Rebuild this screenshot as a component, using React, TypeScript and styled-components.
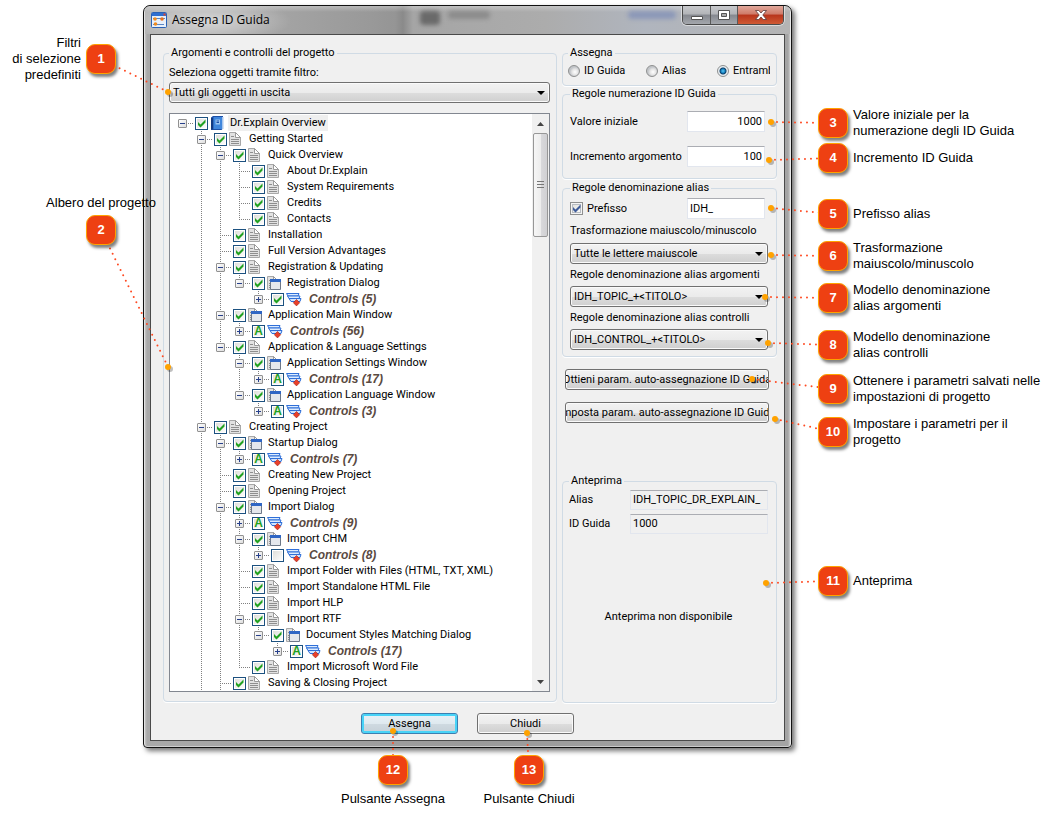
import React from "react";
import styled, { createGlobalStyle, css } from "styled-components";

const uiFont = 'Roboto, "Liberation Sans", sans-serif';
const noteFont = '"Liberation Sans", Arial, sans-serif';

const GlobalStyle = createGlobalStyle`
  * { box-sizing: border-box; }
  body { margin: 0; background: #fff; color: #000; font-family: ${noteFont}; font-size: 13px; }
  button, input, select { font: inherit; color: inherit; margin: 0; }
`;

/* ---------- page ---------- */

const Page = styled.main`
  display: grid;
  grid-template-columns: 143px minmax(0, 1fr) 263px;
  align-items: start;
  padding-top: 5px;
  min-height: 100vh;
`;

const Margin = styled.aside`
  position: relative;
  z-index: 2;
`;

/* ---------- window ---------- */

const Window = styled.section`
  display: flex;
  flex-direction: column;
  padding: 0 6px 6px;
  border: 1px solid #111;
  border-radius: 7px 7px 4px 4px;
  background: linear-gradient(90deg, #d2d2d2 0, #a9a9a9 3px, #9a9a9a 50%, #a4a4a4 calc(100% - 3px), #e0e0e0 100%);
  box-shadow: inset 0 0 0 1px rgba(255, 255, 255, 0.45), 3px 3px 5px rgba(0, 0, 0, 0.55);
  font: 11px/16px ${uiFont};
`;

const TitleBar = styled.header`
  display: flex;
  align-items: flex-start;
  justify-content: space-between;
  height: 28px;
  margin: 0 -5px;
  padding-left: 6px;
  border-radius: 6px 6px 0 0;
  background:
    radial-gradient(ellipse 80px 22px at 66px 15px, rgba(255, 255, 255, 0.5), rgba(255, 255, 255, 0) 100%),
    linear-gradient(rgba(255, 255, 255, 0.3), rgba(255, 255, 255, 0) 6px),
    linear-gradient(90deg, #b4b4b4 0, #999 35%, #959595 250px, #8a8a8a 258px, #a5a5a5 268px, #acacac 400px, #b0b5be 500px, #b4b4b4 100%);
  overflow: hidden;
`;

const Caption = styled.h1`
  display: flex;
  align-items: center;
  gap: 5px;
  height: 28px;
  margin: 0;
  font: 12px/16px "Open Sans", sans-serif;
`;

const Ghosts = styled.div`
  display: flex;
  flex: 1;
  justify-content: flex-end;
  gap: 8px;
  padding: 3px 6px 0 0;
  filter: blur(2px);
`;

const Ghost = styled.i<{ $w: number; $c: string; $h?: number }>`
  width: ${(p) => p.$w}px;
  height: ${(p) => p.$h ?? 8}px;
  margin-top: 2px;
  border-radius: 4px;
  background: ${(p) => p.$c};
`;

const WindowButtons = styled.div`
  display: flex;
  height: 19px;
  margin-right: 6px;
  border: 1px solid #4b4b4b;
  border-top: 0;
  border-radius: 0 0 5px 5px;
  overflow: hidden;
  box-shadow: 0 0 0 1px rgba(255, 255, 255, 0.5);
`;

const WindowButton = styled.button<{ $close?: boolean }>`
  display: grid;
  place-items: center;
  width: ${(p) => (p.$close ? 46 : 27)}px;
  padding: 0;
  border: 0;
  border-left: ${(p) => (p.$close ? "1px solid #5d2019" : "0")};
  background: ${(p) =>
    p.$close
      ? "linear-gradient(#e0a79b 0, #cf7a68 45%, #b8341c 50%, #cf5a34 100%)"
      : "linear-gradient(#c8c9cc 0, #b2b4b8 45%, #85888f 50%, #a4a7ac 100%)"};
  & + & { border-left: 1px solid #5a5a5a; }
`;

const Client = styled.form`
  border: 1px solid #4a4a4a;
  background: #f0f0f0;
`;

const Columns = styled.div`
  display: flex;
  align-items: flex-start;
  gap: 5px;
  padding: 11px 7px 0 12px;
`;

const LeftColumn = styled.div`
  flex: 1;
  min-width: 0;
`;

const RightColumn = styled.div`
  display: flex;
  flex-direction: column;
  flex: none;
  width: 215px;
`;

const Footer = styled.footer`
  display: flex;
  justify-content: center;
  gap: 19px;
  padding: 10px 0 6px;
`;

/* ---------- group boxes and fields ---------- */

const Group = styled.fieldset<{ $pad: string; $gapTop?: number }>`
  min-width: 0;
  margin: ${(p) => p.$gapTop ?? 0}px 0 0;
  padding: ${(p) => p.$pad};
  border: 1px solid #d0dbe5;
  border-radius: 4px;
  box-shadow: 0 1px 0 #fff;
`;

const Legend = styled.legend`
  padding: 0 2px;
  line-height: 14px;
`;

const FieldRow = styled.div<{ $gapTop?: number; $inset?: number }>`
  display: flex;
  align-items: center;
  justify-content: space-between;
  margin-top: ${(p) => p.$gapTop ?? 0}px;
  padding-right: ${(p) => p.$inset ?? 3}px;
`;

const FieldLabel = styled.label<{ $line?: number }>`
  display: block;
  line-height: ${(p) => p.$line ?? 16}px;
  white-space: nowrap;
`;

const TextBox = styled.input<{ $width: number }>`
  width: ${(p) => p.$width}px;
  height: ${(p) => (p.readOnly ? 20 : 21)}px;
  padding: 0 2px 1px;
  border: 1px solid #e2e6ee;
  border-top-color: #abadb3;
  background: ${(p) => (p.readOnly ? "#f0f0f0" : "#fff")};
  outline: 0;
  ${(p) => p.type === "number" && css`
    appearance: textfield;
    text-align: right;
    &::-webkit-inner-spin-button { display: none; }
  `}
`;

const SelectFrame = styled.span`
  display: grid;
  align-items: center;
  & > * { grid-area: 1 / 1; }
  & > svg { justify-self: end; margin-right: 5px; pointer-events: none; }
`;

const Select = styled.select`
  width: 100%;
  height: 21px;
  padding: 0 18px 0 3px;
  border: 1px solid #707070;
  border-radius: 3px;
  background: linear-gradient(#f2f2f2 0, #ebebeb 50%, #dddddd 51%, #cfcfcf 100%);
  box-shadow: inset 0 0 0 1px #fafafa;
  appearance: none;
`;

const Options = styled.div`
  display: grid;
  grid-template-columns: 78px 71px minmax(0, 1fr);
  overflow: hidden;
`;

const Choice = styled.label`
  display: flex;
  align-items: center;
  gap: 4px;
  overflow: hidden;
  white-space: nowrap;
`;

const Radio = styled.input`
  flex: none;
  width: 12px;
  height: 12px;
  border: 1px solid #8e8f8f;
  border-radius: 50%;
  background: radial-gradient(circle at 60% 60%, #fff 0, #e4e4e4 3px, #c2c5c9 5px);
  appearance: none;
  &:checked {
    background: radial-gradient(circle, #5cc9f5 0, #1480c0 2px, #0d3d66 3px, #e8eef2 4px);
  }
`;

const Button = styled.button<{ $primary?: boolean }>`
  display: flex;
  align-items: center;
  justify-content: center;
  width: 100%;
  height: 21px;
  padding: 0;
  border: 1px solid ${(p) => (p.$primary ? "#3c7fb1" : "#707070")};
  border-radius: 3px;
  background: ${(p) =>
    p.$primary
      ? "linear-gradient(#e9f2f7 0, #dfe9ef 50%, #cfdae1 51%, #c5d0d8 100%)"
      : "linear-gradient(#f2f2f2 0, #ebebeb 50%, #dddddd 51%, #cfcfcf 100%)"};
  box-shadow: inset 0 0 0 ${(p) => (p.$primary ? "2px #48d3f7" : "1px #fafafa")};
  white-space: nowrap;
  overflow: hidden;
`;

const ButtonSpot = styled.div`
  position: relative;
  width: 97px;
`;

const ButtonStack = styled.div`
  display: grid;
  grid-template-columns: minmax(0, 1fr);
  gap: 12px;
  margin: 12px 8px 51px 3px;
`;

const Message = styled.p`
  margin: 0;
  padding: 75px 0 77px;
  text-align: center;
`;

/* ---------- tick boxes ---------- */

const TickFrame = styled.span`
  display: grid;
  flex: none;
  place-items: center;
  width: 13px;
  height: 13px;
  & > * { grid-area: 1 / 1; }
  & > :not(input) { pointer-events: none; }
`;

const TickInput = styled.input<{ $soft?: boolean }>`
  width: 13px;
  height: 13px;
  border: 1px solid ${(p) => (p.$soft ? "#8e8f8f" : "#1c5180")};
  background: linear-gradient(135deg, #dcdcd7, #fff);
  box-shadow: inset 0 0 0 1px ${(p) => (p.$soft ? "#f4f4f4, inset 0 0 0 2px #b8bcc2" : "#fff")};
  appearance: none;
`;

const Auto = styled.b`
  font: bold 12px/13px ${noteFont};
  color: #21a121;
`;

type Tick = "on" | "auto" | "off";

function TickBox({ id, state, soft }: { id: string; state: Tick; soft?: boolean }) {
  return (
    <TickFrame>
      <TickInput id={id} type="checkbox" defaultChecked={state !== "off"} $soft={soft} />
      {state === "on" && (
        <svg width="9" height="9" viewBox="0 0 9 9">
          <path d="M1 3v3l2.500 2.500L8.500 3.500V.5L3.500 5.500z" fill={soft ? "#3f5c9a" : "#21a121"} />
        </svg>
      )}
      {state === "auto" && <Auto>A</Auto>}
    </TickFrame>
  );
}

/* ---------- tree ---------- */

type Kind = "book" | "page" | "window" | "controls";
type Node = [level: number, text: string, kind: Kind, tick: Tick];

const nodes: Node[] = [
  [0, "Dr.Explain Overview", "book", "on"],
  [1, "Getting Started", "page", "on"],
  [2, "Quick Overview", "page", "on"],
  [3, "About Dr.Explain", "page", "on"],
  [3, "System Requirements", "page", "on"],
  [3, "Credits", "page", "on"],
  [3, "Contacts", "page", "on"],
  [2, "Installation", "page", "on"],
  [2, "Full Version Advantages", "page", "on"],
  [2, "Registration & Updating", "page", "on"],
  [3, "Registration Dialog", "window", "on"],
  [4, "Controls (5)", "controls", "on"],
  [2, "Application Main Window", "window", "on"],
  [3, "Controls (56)", "controls", "auto"],
  [2, "Application & Language Settings", "page", "on"],
  [3, "Application Settings Window", "window", "on"],
  [4, "Controls (17)", "controls", "auto"],
  [3, "Application Language Window", "window", "on"],
  [4, "Controls (3)", "controls", "auto"],
  [1, "Creating Project", "page", "on"],
  [2, "Startup Dialog", "window", "on"],
  [3, "Controls (7)", "controls", "auto"],
  [2, "Creating New Project", "page", "on"],
  [2, "Opening Project", "page", "on"],
  [2, "Import Dialog", "window", "on"],
  [3, "Controls (9)", "controls", "auto"],
  [3, "Import CHM", "window", "on"],
  [4, "Controls (8)", "controls", "off"],
  [3, "Import Folder with Files (HTML, TXT, XML)", "page", "on"],
  [3, "Import Standalone HTML File", "page", "on"],
  [3, "Import HLP", "page", "on"],
  [3, "Import RTF", "page", "on"],
  [4, "Document Styles Matching Dialog", "window", "on"],
  [5, "Controls (17)", "controls", "auto"],
  [3, "Import Microsoft Word File", "page", "on"],
  [2, "Saving & Closing Project", "page", "on"],
];

/* Branches that go on below the visible part of the list. */
const openLevels = [1, 2];

function continues(index: number, level: number) {
  for (let i = index + 1; i < nodes.length; i++) {
    if (nodes[i][0] === level) return true;
    if (nodes[i][0] < level) return false;
  }
  return openLevels.includes(level);
}

const TreeBox = styled.div`
  display: flex;
  margin-top: 10px;
  border: 1px solid #828790;
  background: #fff;
  overflow: hidden;
`;

const TreeList = styled.ul`
  flex: 1;
  min-width: 0;
  margin: 0;
  padding: 1px 0 0 3px;
  list-style: none;
`;

const TreeRow = styled.li`
  display: flex;
  align-items: center;
  height: 16px;
  white-space: nowrap;
`;

const dotsDown = "repeating-linear-gradient(#808080 0 1px, transparent 1px 2px)";
const dotsAcross = "repeating-linear-gradient(90deg, #808080 0 1px, transparent 1px 2px)";

const Guide = styled.span<{ $line: boolean }>`
  flex: none;
  width: 19px;
  height: 16px;
  background: ${(p) => (p.$line ? `${dotsDown} 9px 0 / 1px 16px no-repeat` : "none")};
`;

const Branch = styled.span<{ $up: boolean; $down: boolean }>`
  display: flex;
  align-items: center;
  flex: none;
  width: 22px;
  height: 16px;
  padding-left: 5px;
  background:
    ${(p) => (p.$up ? `${dotsDown} 9px 0 / 1px ${p.$down ? 16 : 9}px no-repeat,` : "")}
    ${dotsAcross} 9px 8px / 12px 1px no-repeat;
`;

const Expander = styled.button`
  display: grid;
  place-items: center;
  width: 9px;
  height: 9px;
  padding: 0;
  border: 1px solid #919191;
  border-radius: 1px;
  background: linear-gradient(135deg, #fff, #ddd);
`;

const IconSlot = styled.span`
  display: flex;
  flex: none;
  width: 20px;
  padding-left: 2px;
`;

const TreeLabel = styled.label<{ $controls: boolean; $selected: boolean }>`
  padding: 0 2px;
  background: ${(p) => (p.$selected ? "#efefef" : "none")};
  ${(p) => p.$controls && css`
    padding-left: 5px;
    color: #5a4a42;
    font: italic bold 12px/16px ${noteFont};
  `}
`;

const ScrollBar = styled.div`
  display: flex;
  flex: none;
  flex-direction: column;
  align-items: center;
  width: 17px;
  background: #f0f0f0;
`;

const ScrollButton = styled.button<{ $end?: boolean }>`
  display: grid;
  place-items: center;
  width: 17px;
  height: 19px;
  margin-top: ${(p) => (p.$end ? "auto" : 0)};
  padding: 0;
  border: 0;
  background: none;
`;

const Thumb = styled.div`
  display: grid;
  place-items: center;
  width: 15px;
  height: 104px;
  border: 1px solid #979797;
  border-radius: 2px;
  background: linear-gradient(90deg, #f6f6f6 0, #ededed 50%, #d9d9dc 51%, #d0d0d3 100%);
`;

const Arrow = ({ up }: { up?: boolean }) => (
  <svg width="7" height="4" viewBox="0 0 7 4">
    <path d={up ? "M0 4 3.5 0 7 4z" : "M0 0h7L3.5 4z"} fill="#444" />
  </svg>
);

const DropArrow = () => (
  <svg width="8" height="4" viewBox="0 0 8 4">
    <path d="M0 0h8L4 4z" fill="#000" />
  </svg>
);

const PageShape = () => (
  <>
    <path d="M.5.5h6l5 5v8H.5z" fill="#e2e2e2" stroke="#a8a8a8" />
    <path d="M6.500.5v5h5z" fill="#fff" stroke="#9a9a9a" />
    <path d="M2 4.500h3M2 7.500h8M2 9.500h8M2 11.500h8" stroke="#8e8e8e" />
  </>
);

function TreeIcon({ kind }: { kind: Kind }) {
  if (kind === "book")
    return (
      <svg width="14" height="14" viewBox="0 0 14 14">
        <path d="M1 1.500 3 0h10v12.500L11.500 14H1z" fill="#1c50a8" />
        <path d="M3.500 1H13v12H3.500z" fill="#3f86dc" />
        <path d="M12 1h1.500v12H12z" fill="#a9c6ec" />
        <path d="M1 2h2v11.500H1z" fill="#123a82" />
        <path d="M5.500 3.500h4.500v5H5.500z" fill="#9cc6f3" />
        <path d="M6.500 5h2.500M6.500 6.500h2.500" stroke="#1c50a8" />
      </svg>
    );
  if (kind === "controls")
    return (
      <svg width="16" height="14" viewBox="0 0 16 14">
        <path d="M.5 1.500h12.500l-1 2.500H2z" fill="#dcecff" stroke="#2f6fd8" />
        <path d="M1.500 4h12.500l-1 2.500H3z" fill="#dcecff" stroke="#2f6fd8" />
        <path d="M3 6.500h12l-1 3H5z" fill="#cfe4ff" stroke="#2f6fd8" />
        <path d="M10.500 7.500l3.200 3.200-3.200 3.200-3.200-3.200z" fill="#e8402a" stroke="#a3241a" strokeWidth=".6" />
      </svg>
    );
  return (
    <svg width="14" height="14" viewBox="0 0 14 14">
      <PageShape />
      {kind === "window" && (
        <>
          <path d="M3.500 3.500h10v10h-10z" fill="#e4e7ec" stroke="#6d7888" />
          <path d="M3 3h11v3H3z" fill="#2f66c4" />
        </>
      )}
    </svg>
  );
}

function Tree() {
  return (
    <TreeBox>
      <TreeList>
        {nodes.map(([level, text, kind, tick], i) => {
          const hasChildren = nodes[i + 1]?.[0] > level;
          const expandable = hasChildren || kind === "controls";
          return (
            <TreeRow key={i}>
              {Array.from({ length: level }, (_, l) => (
                <Guide key={l} $line={l > 0 && continues(i, l)} />
              ))}
              <Branch $up={level > 0} $down={continues(i, level)}>
                {expandable && (
                  <Expander type="button" aria-label={hasChildren ? "Comprimi" : "Espandi"}>
                    <svg width="5" height="5" viewBox="0 0 5 5">
                      <path d={hasChildren ? "M0 2.500h5" : "M0 2.500h5M2.500 0v5"} stroke="#27408b" />
                    </svg>
                  </Expander>
                )}
              </Branch>
              <TickBox id={`node-${i}`} state={tick} />
              <IconSlot>
                <TreeIcon kind={kind} />
              </IconSlot>
              <TreeLabel htmlFor={`node-${i}`} $controls={kind === "controls"} $selected={i === 0}>
                {text}
              </TreeLabel>
            </TreeRow>
          );
        })}
      </TreeList>
      <ScrollBar>
        <ScrollButton type="button" aria-label="Scorri su"><Arrow up /></ScrollButton>
        <Thumb>
          <svg width="7" height="8" viewBox="0 0 7 8">
            <path d="M0 .5h7M0 3.500h7M0 6.500h7" stroke="#777" />
          </svg>
        </Thumb>
        <ScrollButton type="button" aria-label="Scorri giù" $end><Arrow /></ScrollButton>
      </ScrollBar>
    </TreeBox>
  );
}

/* ---------- callouts ---------- */

const CalloutBox = styled.div<{ $x: number; $y: number }>`
  position: absolute;
  z-index: 2;
  left: ${(p) => p.$x}px;
  top: ${(p) => p.$y}px;
  width: 30px;
  height: 30px;
  pointer-events: none;
`;

const Leader = styled.svg`
  position: absolute;
  left: 15px;
  top: 15px;
  width: 1px;
  height: 1px;
  overflow: visible;
`;

const Badge = styled.b`
  position: relative;
  display: grid;
  place-items: center;
  width: 30px;
  height: 30px;
  border: 1px solid #ffa200;
  border-radius: 9px;
  background: #ee4012;
  box-shadow: 2px 3px 3px rgba(0, 0, 0, 0.5);
  color: #fff;
  font: bold 13px/16px ${noteFont};
`;

type Side = "left" | "right" | "above" | "below";

const Note = styled.span<{ $side: Side }>`
  position: absolute;
  font: 13px/16px ${noteFont};
  white-space: pre;
  ${(p) =>
    ({
      left: "right: 35px; top: 50%; transform: translateY(-50%); text-align: right;",
      right: "left: 35px; top: 50%; transform: translateY(-50%);",
      above: "left: 50%; bottom: 34px; transform: translateX(-50%);",
      below: "left: 50%; top: 36px; transform: translateX(-50%);",
    })[p.$side]}
`;

type CalloutProps = { n: number; text: string; side: Side; x: number; y: number; dx: number; dy: number };

/* x, y place the badge; dx, dy lead from its centre to the target. */
function Callout({ n, text, side, x, y, dx, dy }: CalloutProps) {
  return (
    <CalloutBox $x={x} $y={y}>
      <Leader>
        <line x1={dx} y1={dy} x2="0" y2="0" stroke="#ff4a22" strokeWidth="2" strokeLinecap="round" strokeDasharray="0 6" />
        <circle cx={dx + 2} cy={dy + 2} r="3" fill="#000" opacity=".25" />
        <circle cx={dx} cy={dy} r="3" fill="#ffa200" />
      </Leader>
      <Badge>{n}</Badge>
      <Note $side={side}>{text}</Note>
    </CalloutBox>
  );
}

const leftNotes: CalloutProps[] = [
  { n: 1, text: "Filtri\ndi selezione\npredefiniti", side: "left", x: 86, y: 39, dx: 67, dy: 33 },
  { n: 2, text: "Albero del progetto", side: "above", x: 86, y: 210, dx: 67, dy: 137 },
];

const rightNotes: CalloutProps[] = (
  [
    [3, "Valore iniziale per la\nnumerazione degli ID Guida", 103, -62, -1],
    [4, "Incremento ID Guida", 138, -64, 2],
    [5, "Prefisso alias", 194, -62, -6],
    [6, "Trasformazione\nmaiuscolo/minuscolo", 236, -62, -1],
    [7, "Modello denominazione\nalias argomenti", 278, -68, -1],
    [8, "Modello denominazione\nalias controlli", 325, -65, -2],
    [9, "Ottenere i parametri salvati nelle\nimpostazioni di progetto", 369, -81, -10],
    [10, "Impostare i parametri per il\nprogetto", 412, -58, -13],
    [11, "Anteprima", 561, -67, 2],
  ] as [number, string, number, number, number][]
).map(([n, text, y, dx, dy]) => ({ n, text, side: "right", x: 26, y, dx, dy }));

/* ---------- app ---------- */

function Drop({ id, value }: { id: string; value: string }) {
  return (
    <SelectFrame>
      <Select id={id} defaultValue={value}>
        <option>{value}</option>
      </Select>
      <DropArrow />
    </SelectFrame>
  );
}

export default function App() {
  return (
    <Page>
      <GlobalStyle />
      <Margin>
        {leftNotes.map((c) => <Callout key={c.n} {...c} />)}
      </Margin>
      <Window>
        <TitleBar>
          <Caption>
            <svg width="16" height="16" viewBox="0 0 16 16">
              <rect x=".5" y=".5" width="15" height="15" rx="1" fill="#e8f0fa" stroke="#2b62b5" />
              <path d="M1 1h14v3H1z" fill="#2f6fd0" />
              <path d="M12.500 1.500h2v2h-2z" fill="#e2442c" />
              <path d="M2 6.500h12M2 12.500h11" stroke="#5b86c4" />
              <circle cx="4" cy="7" r="1.800" fill="#f08a1c" />
              <circle cx="11" cy="7" r="1.800" fill="#e8701c" />
              <circle cx="4.500" cy="12" r="1.800" fill="#f08a1c" />
            </svg>
            Assegna ID Guida
          </Caption>
          <Ghosts>
            <Ghost $w={20} $h={14} $c="#6a6a6a" />
            <Ghost $w={42} $c="#8c8c8c" />
            <Ghost $w={122} $c="transparent" />
            <Ghost $w={48} $c="#8c98b8" />
          </Ghosts>
          <WindowButtons>
            <WindowButton type="button" aria-label="Riduci a icona">
              <svg width="12" height="12" viewBox="0 0 12 12">
                <path d="M.5 7.500h11v3H.5z" fill="#fff" stroke="#555" />
              </svg>
            </WindowButton>
            <WindowButton type="button" aria-label="Ingrandisci">
              <svg width="12" height="10" viewBox="0 0 12 10">
                <path d="M.5.500h11v9H.5z" fill="#fff" stroke="#555" />
                <path d="M3.500 3.500h5v3h-5z" fill="#aaa" stroke="#555" />
              </svg>
            </WindowButton>
            <WindowButton type="button" aria-label="Chiudi finestra" $close>
              <svg width="12" height="10" viewBox="0 0 12 10">
                <path d="M.5.500h3.300L6 3 8.200.500h3.300L7.800 5l3.700 4.500H8.200L6 7 3.800 9.500H.5L4.200 5z" fill="#fff" stroke="#5a3a3a" strokeWidth=".8" />
              </svg>
            </WindowButton>
          </WindowButtons>
        </TitleBar>
        <Client onSubmit={(e) => e.preventDefault()}>
          <Columns>
            <LeftColumn>
              <Group $pad="3px 6px 9px 5px">
                <Legend>Argomenti e controlli del progetto</Legend>
                <FieldLabel htmlFor="filter" $line={19}>Seleziona oggetti tramite filtro:</FieldLabel>
                <Drop id="filter" value="Tutti gli oggetti in uscita" />
                <Tree />
              </Group>
            </LeftColumn>
            <RightColumn>
              <Group $pad="3px 6px 6px 5px">
                <Legend>Assegna</Legend>
                <Options>
                  <Choice><Radio type="radio" name="assign" />ID Guida</Choice>
                  <Choice><Radio type="radio" name="assign" />Alias</Choice>
                  <Choice><Radio type="radio" name="assign" defaultChecked />Entrambi</Choice>
                </Options>
              </Group>
              <Group $pad="10px 8px 11px 7px" $gapTop={1}>
                <Legend>Regole numerazione ID Guida</Legend>
                <FieldRow>
                  <FieldLabel htmlFor="start">Valore iniziale</FieldLabel>
                  <TextBox id="start" type="number" defaultValue="1000" $width={78} />
                </FieldRow>
                <FieldRow $gapTop={14}>
                  <FieldLabel htmlFor="step">Incremento argomento</FieldLabel>
                  <TextBox id="step" type="number" defaultValue="100" $width={78} />
                </FieldRow>
              </Group>
              <Group $pad="3px 8px 6px 7px" $gapTop={2}>
                <Legend>Regole denominazione alias</Legend>
                <FieldRow>
                  <Choice htmlFor="prefix-on">
                    <TickBox id="prefix-on" state="on" soft />Prefisso
                  </Choice>
                  <TextBox type="text" aria-label="Prefisso" defaultValue="IDH_" $width={78} />
                </FieldRow>
                <FieldLabel htmlFor="case" $line={24}>Trasformazione maiuscolo/minuscolo</FieldLabel>
                <Drop id="case" value="Tutte le lettere maiuscole" />
                <FieldLabel htmlFor="topics" $line={22}>Regole denominazione alias argomenti</FieldLabel>
                <Drop id="topics" value="IDH_TOPIC_+<TITOLO>" />
                <FieldLabel htmlFor="controls" $line={22}>Regole denominazione alias controlli</FieldLabel>
                <Drop id="controls" value="IDH_CONTROL_+<TITOLO>" />
              </Group>
              <ButtonStack>
                <Button type="button">Ottieni param. auto-assegnazione ID Guida</Button>
                <Button type="button">Imposta param. auto-assegnazione ID Guida</Button>
              </ButtonStack>
              <Group $pad="0 8px 0 6px">
                <Legend>Anteprima</Legend>
                <FieldRow $gapTop={2} $inset={0}>
                  <FieldLabel htmlFor="alias">Alias</FieldLabel>
                  <TextBox id="alias" readOnly defaultValue="IDH_TOPIC_DR_EXPLAIN_" $width={138} />
                </FieldRow>
                <FieldRow $gapTop={4} $inset={0}>
                  <FieldLabel htmlFor="help-id">ID Guida</FieldLabel>
                  <TextBox id="help-id" readOnly defaultValue="1000" $width={138} />
                </FieldRow>
                <Message>Anteprima non disponibile</Message>
              </Group>
            </RightColumn>
          </Columns>
          <Footer>
            <ButtonSpot>
              <Button type="submit" $primary>Assegna</Button>
              <Callout n={12} text="Pulsante Assegna" side="below" x={17} y={42} dx={0} dy={-39} />
            </ButtonSpot>
            <ButtonSpot>
              <Button type="button">Chiudi</Button>
              <Callout n={13} text="Pulsante Chiudi" side="below" x={37} y={42} dx={-2} dy={-37} />
            </ButtonSpot>
          </Footer>
        </Client>
      </Window>
      <Margin>
        {rightNotes.map((c) => <Callout key={c.n} {...c} />)}
      </Margin>
    </Page>
  );
}
